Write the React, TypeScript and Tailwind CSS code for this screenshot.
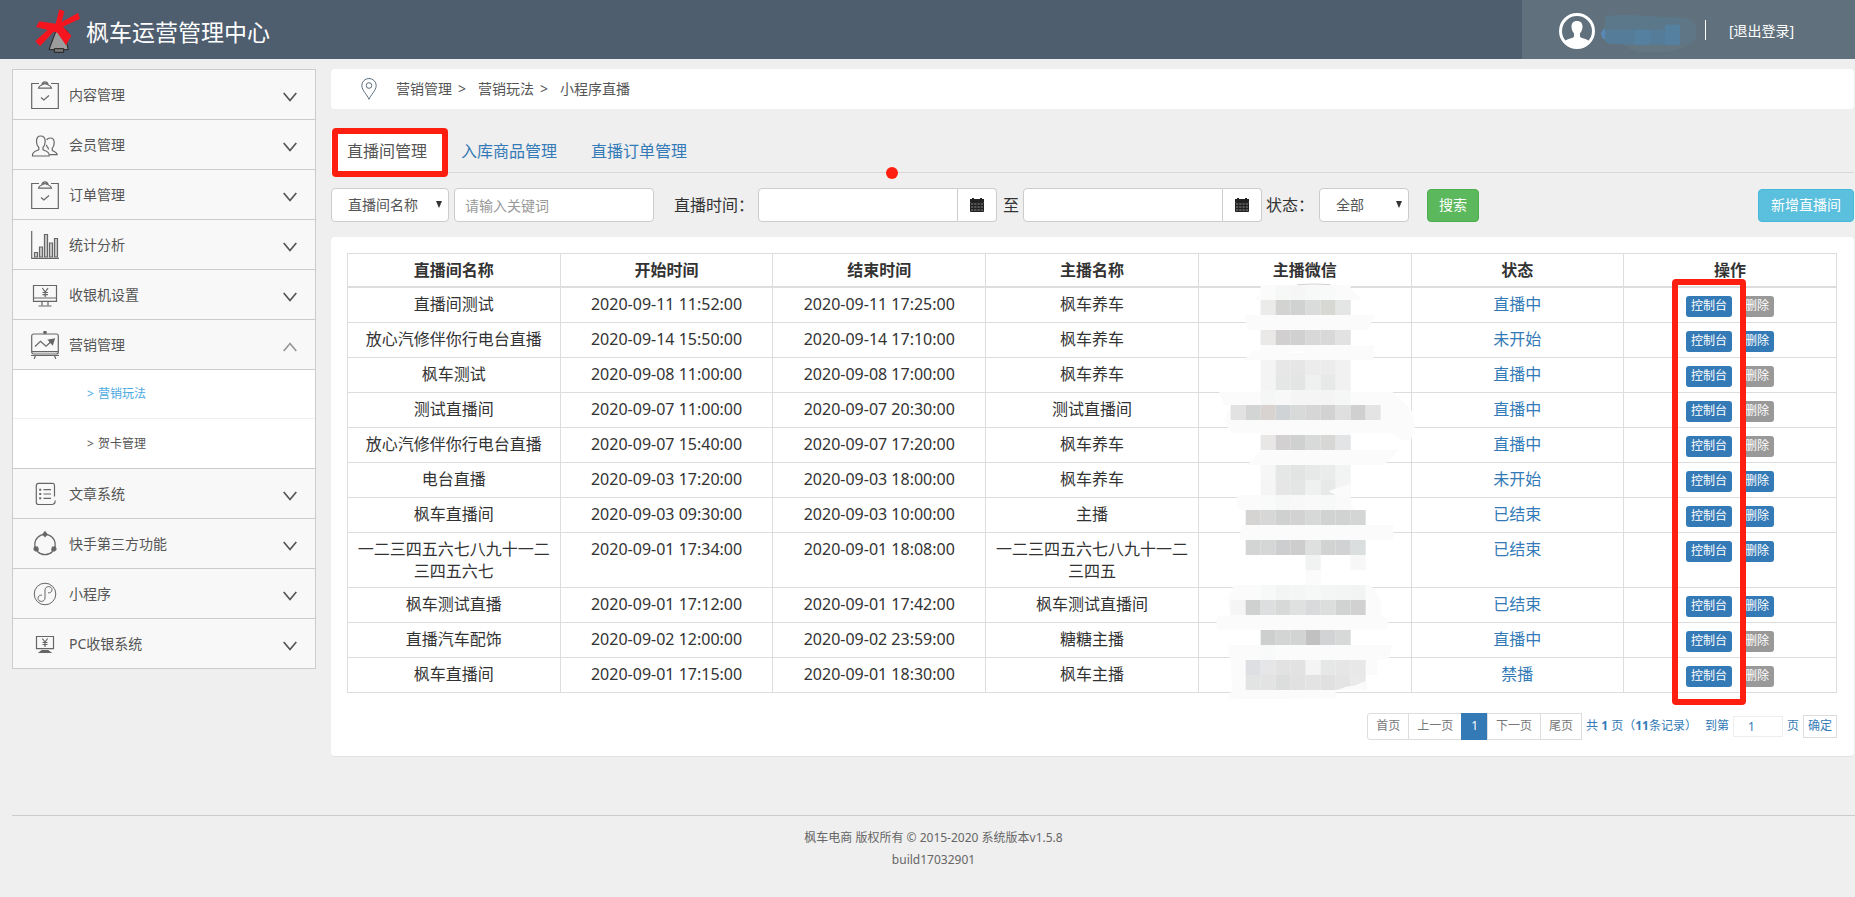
import type { ReactNode } from "react";
import clsx from "clsx";

interface Room {
  name: string;
  start: string;
  end: string;
  host: string;
  status: string;
  canDelete: boolean;
}

const rooms: Room[] = [
  { name: "直播间测试", start: "2020-09-11 11:52:00", end: "2020-09-11 17:25:00", host: "枫车养车", status: "直播中", canDelete: false },
  { name: "放心汽修伴你行电台直播", start: "2020-09-14 15:50:00", end: "2020-09-14 17:10:00", host: "枫车养车", status: "未开始", canDelete: true },
  { name: "枫车测试", start: "2020-09-08 11:00:00", end: "2020-09-08 17:00:00", host: "枫车养车", status: "直播中", canDelete: false },
  { name: "测试直播间", start: "2020-09-07 11:00:00", end: "2020-09-07 20:30:00", host: "测试直播间", status: "直播中", canDelete: false },
  { name: "放心汽修伴你行电台直播", start: "2020-09-07 15:40:00", end: "2020-09-07 17:20:00", host: "枫车养车", status: "直播中", canDelete: false },
  { name: "电台直播", start: "2020-09-03 17:20:00", end: "2020-09-03 18:00:00", host: "枫车养车", status: "未开始", canDelete: true },
  { name: "枫车直播间", start: "2020-09-03 09:30:00", end: "2020-09-03 10:00:00", host: "主播", status: "已结束", canDelete: true },
  { name: "一二三四五六七八九十一二三四五六七", start: "2020-09-01 17:34:00", end: "2020-09-01 18:08:00", host: "一二三四五六七八九十一二三四五", status: "已结束", canDelete: true },
  { name: "枫车测试直播", start: "2020-09-01 17:12:00", end: "2020-09-01 17:42:00", host: "枫车测试直播间", status: "已结束", canDelete: true },
  { name: "直播汽车配饰", start: "2020-09-02 12:00:00", end: "2020-09-02 23:59:00", host: "糖糖主播", status: "直播中", canDelete: false },
  { name: "枫车直播间", start: "2020-09-01 17:15:00", end: "2020-09-01 18:30:00", host: "枫车主播", status: "禁播", canDelete: false },
];

const columns = ["直播间名称", "开始时间", "结束时间", "主播名称", "主播微信", "状态", "操作"];

function Icon({ children }: { children: ReactNode }) {
  return (
    <svg
      viewBox="0 0 28 28"
      className="h-7 w-7 shrink-0"
      fill="none"
      stroke="#666"
      strokeWidth="1.2"
      aria-hidden="true"
    >
      {children}
    </svg>
  );
}

function ClipboardIcon() {
  return (
    <Icon>
      <path d="M8 2.500H.7v25h26.600v-25H20" />
      <path d="M7.500 7.200h13c-.3-2-1.800-2.700-3.300-3.200C16.800 1.800 15.500.8 14 .8s-2.800 1-3.200 3.200c-1.500.5-3 1.200-3.300 3.200zM11.800 3.800c1-1.600 3.400-1.600 4.400 0" />
      <path d="M10 16.500l2.800 2.500 5.200-4.500" />
    </Icon>
  );
}

function UsersIcon() {
  return (
    <Icon>
      <path d="M9.500 5c-3 0-4 2.400-4 5.200 0 2.800 1 5 2.300 6.300v2.200c-1 1-6.300 1.500-6.300 5.300v1h16.700v-1c0-3.800-5.200-4.300-6.200-5.300v-2.200c1.300-1.300 2.200-3.500 2.200-6.300 0-2.800-1.200-5.200-4.700-5.200z" />
      <path d="M15.600 8.800c.8-1.200 2-1.800 3.600-1.800 3 0 4 2 4 4.700 0 2.300-.8 4.300-2 5.600v2c1 1 5 1.700 5 4.400h-7.400M17.300 18.500v-1.300c-.8-.8-1.600-2-1.900-3.400" />
    </Icon>
  );
}

function BarsIcon() {
  return (
    <Icon>
      <path d="M.7 0v27.400H28" />
      <path
        d="M3.500 21.500h3V26h-3zM8.500 16h3v10h-3zM13.500 3.500h3V26h-3zM18.500 12h3v14h-3zM23.500 7.500h3V26h-3z"
        fill="#ccc"
      />
    </Icon>
  );
}

function CashierIcon() {
  return (
    <Icon>
      <path d="M2.500 4.500h23v15.800h-23zM2.500 17h23M11 20.300v4M17 20.300v4M7.500 25h13" />
      <path d="M11.300 7l2.900 4 2.900-4M14.200 11v5M11.500 11.500h5.400M11.500 13.600h5.400" />
    </Icon>
  );
}

function BoardIcon() {
  return (
    <Icon>
      <rect x=".7" y="3" width="26.600" height="20" rx="2" />
      <path d="M1 20.600h26M0 24.500h28M4.500 24.500L3.200 28M23.500 24.500l1.300 3.500" />
      <path d="M4 15.500l5.500-5.200 5.500 5 5-4.500" />
      <path d="M17.500 9l5.800-1-1.800 5.500z" fill="#666" />
      <circle cx="14" cy="1.500" r="1.200" fill="#666" />
    </Icon>
  );
}

function ArticleIcon() {
  return (
    <Icon>
      <path d="M23.500 16.500v-11c0-1.400-.8-2.200-2.200-2.200H7.500c-1.400 0-2.200.8-2.200 2.200v16.800c0 1.400.8 2.200 2.200 2.200h13.200c2.300 0 3.500-1.700 3.500-4" />
      <path d="M12.500 9.700H20M12.500 14H20M12.500 18.300H20" />
      <path d="M8.200 9.700h2M8.200 14h2M8.200 18.300h2" strokeWidth="2" />
    </Icon>
  );
}

function NodesIcon() {
  return (
    <Icon>
      <circle cx="14" cy="14.500" r="10.200" />
      <path d="M14 1.800l2 2.400-2 2.400-2-2.400zM3.500 17h3l.8 3-2.500 1L3 19.500zM24.500 17h-3l-.8 3 2.500 1 1.800-1.500z" fill="#666" />
    </Icon>
  );
}

function MiniProgramIcon() {
  return (
    <Icon>
      <circle cx="14" cy="14" r="10.800" strokeWidth="1" />
      <path
        d="M17 12.800c2 .4 4-.9 4-3 0-1.900-1.500-3.200-3.300-3.200-2 0-3.700 1.300-3.700 3.400v8c0 2.100-1.700 3.400-3.700 3.400C8.500 21.400 7 20.100 7 18.200c0-2.100 2-3.400 4-3"
        strokeWidth="1"
      />
    </Icon>
  );
}

function PcIcon() {
  return (
    <Icon>
      <path d="M5.500 6.500h17v12.200h-17z" />
      <path d="M11.300 8.500L14 12l2.700-3.500M14 12v5M11.500 12.500h5M11.500 14.500h5" />
      <path d="M11 20.500h6l2.500 2h-11z" fill="#666" />
    </Icon>
  );
}

function Arrow({ open = false }: { open?: boolean }) {
  return (
    <svg
      viewBox="0 0 14 10"
      className={clsx("ml-auto mt-1 h-[10px] w-[14px] shrink-0", open && "rotate-180")}
      fill="none"
      stroke={open ? "#999" : "#555"}
      strokeWidth="1.7"
      aria-hidden="true"
    >
      <path d="M.7 1L7 8.500 13.300 1" />
    </svg>
  );
}

function NavItem({ icon, label, open }: { icon: ReactNode; label: string; open?: boolean }) {
  return (
    <button
      aria-expanded={!!open}
      className="flex h-[50px] w-full items-center border-b border-[#ccc] bg-[#f8f8f8] px-[18px] text-sm text-[#555]"
    >
      {icon}
      <span className="ml-[10px]">{label}</span>
      <Arrow open={open} />
    </button>
  );
}

function Sidebar() {
  return (
    <nav className="w-[304px] shrink-0 self-start border border-b-0 border-[#ccc]">
      <NavItem icon={<ClipboardIcon />} label="内容管理" />
      <NavItem icon={<UsersIcon />} label="会员管理" />
      <NavItem icon={<ClipboardIcon />} label="订单管理" />
      <NavItem icon={<BarsIcon />} label="统计分析" />
      <NavItem icon={<CashierIcon />} label="收银机设置" />
      <NavItem icon={<BoardIcon />} label="营销管理" open />
      <a href="#play" className="flex h-[49px] items-center gap-1 border-b border-[#eee] bg-white pl-[74px] text-xs text-[#4aa9e0]">
        <span>&gt;</span>营销玩法
      </a>
      <a href="#card" className="flex h-[50px] items-center gap-1 border-b border-[#ccc] bg-white pl-[74px] text-xs text-[#555]">
        <span>&gt;</span>贺卡管理
      </a>
      <NavItem icon={<ArticleIcon />} label="文章系统" />
      <NavItem icon={<NodesIcon />} label="快手第三方功能" />
      <NavItem icon={<MiniProgramIcon />} label="小程序" />
      <NavItem icon={<PcIcon />} label="PC收银系统" />
    </nav>
  );
}

function Header() {
  return (
    <header className="flex h-[59px] items-center bg-[#4f5e6f] text-white">
      <svg viewBox="0 0 135 135" className="ml-[35px] mt-1 h-[45px] w-[45px]" aria-hidden="true">
        <path d="M66 58L42 122h58L85 62z" fill="#9c9c9c" stroke="#222" strokeWidth="3" />
        <path d="M58 119h28v11H58z" fill="#777" stroke="#222" strokeWidth="3" />
        <path d="M60 54l23 2 17 14-12 2z" fill="#9c9c9c" stroke="#222" strokeWidth="3" />
        <path d="M73 1l15 6-8 32 49-27 6 17-51 24 25 27-16 29-26-38-11-3-41 44L1 96l37-33L3 54l10-17 49 7z" fill="#f5151f" />
      </svg>
      <h1 className="mt-1 pl-[6px] text-[23px] leading-8">枫车运营管理中心</h1>
      <div className="ml-auto flex h-full w-[333px] items-center bg-[#60707c] pl-[37px]">
        <svg viewBox="0 0 36 36" className="mt-[3px] h-9 w-9" aria-hidden="true">
          <circle cx="18" cy="18" r="16.500" fill="none" stroke="#fff" strokeWidth="3" />
          <path d="M18 8c-3.500 0-5.500 2.200-5.500 5.500 0 3 .9 5 2.500 6.800v3.200c-1 2-6.500 2-9 4.500C9 32 13 34.500 18 34.500S27 32 30 28c-2.500-2.500-8-2.500-9-4.500v-3.200c1.600-1.800 2.500-3.800 2.500-6.800C23.500 10.200 21.500 8 18 8z" fill="#fff" />
        </svg>
        <svg viewBox="30 46 291 114" className="ml-[5px] mt-[9px] h-[38px] w-[97px]" aria-hidden="true">
          <clipPath id="account">
            <path d="M45 50c45-6 90-4 130 0 40 2 70 2 100 3 35 4 47 25 45 50-2 18-15 27-30 35-25 16-60 20-100 20-40 1-65-1-85-22-20-4-40-1-50-5-15-7-20-20-23-30l8-13z" />
          </clipPath>
          <g clipPath="url(#account)">
            <path d="M30 46h291v114H30z" fill="#647680" />
            <path d="M45 46h225v44H45z" fill="#5b788a" />
            <path d="M45 90h225v45H45z" fill="#557d99" />
            <path d="M135 90h45v45h-45zM225 75h45v60h-45z" fill="#5680a0" />
            <path d="M270 56h50v79h-50z" fill="#5e7686" />
            <path d="M30 88h15v30H30z" fill="#5a88b5" />
          </g>
        </svg>
        <span className="ml-2 h-5 w-px bg-white" />
        <a href="#logout" className="ml-[23px] mt-[3px] text-sm">[退出登录]</a>
      </div>
    </header>
  );
}

function Tabs() {
  return (
    <div className="relative mt-5 flex gap-[34px] border-b border-[#d8d8d8]">
      <div className="-mb-px border-[6px] border-transparent bg-white px-[10px] py-2">
        <a href="#rooms" className="block text-base leading-[16px] text-[#555]">直播间管理</a>
      </div>
      <a href="#goods" className="-ml-[16px] self-center text-base text-[#337ab7]">入库商品管理</a>
      <a href="#orders" className="self-center text-base text-[#337ab7]">直播订单管理</a>
      <span className="absolute -bottom-[5px] left-px h-[49px] w-[116px] rounded border-[6px] border-[#ff1f10]" />
      <span className="absolute -bottom-[7px] left-[555px] h-3 w-3 rounded-full bg-[#ff1f10]" />
    </div>
  );
}

function Caret() {
  return (
    <svg viewBox="0 0 6 7" className="pointer-events-none absolute right-[7px] top-[13px] h-[7px] w-[6px]" aria-hidden="true">
      <path d="M0 0h6L3 7z" fill="#333" />
    </svg>
  );
}

function DateInput({ id, label }: { id: string; label: string }) {
  return (
    <div className="flex h-[34px] w-[239px]">
      <input
        id={id}
        aria-label={label}
        className="min-w-0 flex-1 rounded-l border border-[#ccc] bg-white px-3 text-sm"
      />
      <button
        type="button"
        aria-label={`选择${label}`}
        className="flex w-[39px] items-center justify-center rounded-r border border-l-0 border-[#ccc] bg-white"
      >
        <svg viewBox="0 0 14 14" className="h-[14px] w-[14px]" aria-hidden="true">
          <path d="M0 1h2V0h2v1h6V0h2v1h2v3H0z" fill="#222" />
          <path d="M.5 4.500h13v9H.5zM.5 7.500h13M.5 10.500h13M3.700 4.500v9M7 4.500v9M10.300 4.500v9" fill="#555" stroke="#222" />
        </svg>
      </button>
    </div>
  );
}

function Filters() {
  return (
    <form className="mt-[15px] flex items-center text-base text-[#333]">
      <div className="relative">
        <select
          aria-label="搜索字段"
          className="block h-[34px] w-[118px] appearance-none rounded border border-[#ccc] bg-white pl-4 text-sm text-[#555]"
        >
          <option>直播间名称</option>
        </select>
        <Caret />
      </div>
      <input
        aria-label="关键词"
        placeholder="请输入关键词"
        className="ml-[5px] h-[34px] w-[200px] rounded border border-[#ccc] bg-white px-[10px] text-sm placeholder:text-[#999]"
      />
      <label htmlFor="from" className="ml-5 mr-1">直播时间：</label>
      <DateInput id="from" label="开始时间" />
      <label htmlFor="to" className="ml-1.5 mr-1">至</label>
      <DateInput id="to" label="结束时间" />
      <label htmlFor="status" className="ml-1 mr-[5px]">状态：</label>
      <div className="relative">
        <select
          id="status"
          className="block h-[34px] w-[90px] appearance-none rounded border border-[#ccc] bg-white pl-4 text-sm text-[#555]"
        >
          <option>全部</option>
        </select>
        <Caret />
      </div>
      <button type="button" className="ml-[18px] h-[33px] rounded border border-[#4cae4c] bg-[#5cb85c] px-[11px] text-sm text-white">
        搜索
      </button>
      <button type="button" className="ml-auto h-[33px] rounded border border-[#46b8da] bg-[#5bc0de] px-3 text-sm text-white">
        新增直播间
      </button>
    </form>
  );
}

// Censored host accounts: [x, y, colours of consecutive 45-unit cells]
const mosaic: [number, number, string[]][] = [
  [285, 46, ["#f6f7f7", "#f5f6f5", "#f7f8f8", "#f8f9f9"]],
  [240, 90, ["#ebebe9", "#d3d3d2", "#d0d2d2", "#dadcdc", "#d7d7d4", "#e4e5e5"]],
  [240, 180, ["#ebe8e8", "#d1cfcf", "#d0d0d0", "#d8d8d8", "#d8d8d8", "#e2e2e3"]],
  [240, 270, ["#f4f4f4", "#e7e7e7", "#e6e6e6", "#ececec", "#ececec", "#f1f1f1"]],
  [240, 315, ["#f4f4f4", "#e5e6e6", "#e3e4e4", "#eff0f0", "#e7e8e8", "#f1f1f1"]],
  [240, 360, ["#f5f6f6", "#f8f8f8", "#f5f5f5", "#f5f5f5", "#f4f4f4", "#f5f6f6"]],
  [150, 405, ["#e2e2e2", "#d3d4d4", "#d8d2d0", "#d0d3d6", "#d8d9d9", "#d5d6d5", "#d2d2d2", "#dfdfdf", "#d0d0d1", "#e4e4e4"]],
  [240, 495, ["#e8e7e6", "#d2d0d0", "#cfd0d0", "#d8d9d9", "#d7d8d5", "#e3e4e5"]],
  [240, 585, ["#f5f6f5", "#e5e6e6", "#e2e4e4", "#e7e9e9", "#eaebeb", "#f2f3f3"]],
  [240, 630, ["#f4f5f4", "#e5e6e5", "#e4e5e5", "#eff1f1", "#e7e8e8", "#f4f4f4"]],
  [240, 675, ["#f9fafa", "#f6f7f7", "#f8f8f8", "#f9f9f9", "#f7f8f8", "#fafafa"]],
  [195, 720, ["#d5d4d3", "#d7d7d7", "#cfd0d0", "#d2d2d2", "#d7d8d8", "#d1d2d2", "#d1d3d3", "#d4d6d6"]],
  [195, 810, ["#d3d5d5", "#d5d6d6", "#cdcecf", "#cdcdce", "#dedfdf", "#d1d3d3", "#d1d2d3", "#dbdede"]],
  [375, 855, ["#f1f2f2"]],
  [510, 855, ["#f7f7f7"]],
  [240, 945, ["#f7f8f8", "#f3f4f4", "#f4f5f5", "#f6f7f7", "#f4f5f5", "#f3f4f4", "#f2f3f3"]],
  [150, 990, ["#f5f5f5", "#cfd0d0", "#dddedf", "#d7d8d8", "#dfe0e0", "#d9dadb", "#dcdddd", "#d1d2d2", "#d1d1d1"]],
  [240, 1080, ["#cdcece", "#d3d4d4", "#d2d3d3", "#c1c1c1", "#d2d3d4", "#d7d8d8"]],
  [240, 1125, ["#f8f9f9"]],
  [195, 1170, ["#dddfe2", "#e6e6e8", "#e2e2e2", "#e2e2e2", "#f4f4f4", "#e6e7e7", "#e6e6e6", "#e8e8e8"]],
  [195, 1215, ["#e2e3e3", "#e3e3e3", "#dcdddd", "#e1e1e1", "#e3e3e3", "#e0e0e0", "#e4e4e4", "#e9e9e9"]],
];

function Mosaic() {
  return (
    <svg viewBox="52 0 639 1290" className="mt-[17px] h-[430px] w-[213px] overflow-visible" aria-hidden="true">
      <g fill="#fbfbfb">
        <path d="M220 90l40-38 90-8h110l50 12 35 34z" />
        <path d="M200 180l-8-45h390l-20 45zM190 270l25-28 365-16-2 44zM240 45h270v1215H240z" />
        <path d="M130 405l-15-40h520l40 38 18 17 10 50-12 40h-30l-30-22H150l-20-38 20-45z" />
        <path d="M200 585l40-45h415l-45 45zM175 720l-8-45h320l35 45zM175 810l8-45h455v45z" />
        <path d="M140 990l20-45h410l30 45v45l25 12-5 32H108v-42h42z" />
        <path d="M150 1170l-10-45h495l-10 40-35 5v45h-35v20l-90 20v30l-325 3 15-30z" />
      </g>
      <path d="M430 666l80-26v35h-50zM240 855h135v90H240zM420 855h90v90h-90zM350 242l30 7h-60z" fill="#fff" />
      {mosaic.map(([x, y, cells]) =>
        cells.map((color, i) => (
          <rect key={`${x + i * 45}-${y}`} x={x + i * 45} y={y} width="45" height="45" fill={color} />
        ))
      )}
      <path d="M443 663l67-22v34h-45zM470 1260l25-10 25-3 35-14v27z" fill="#fbfbfb" />
      <path d="M350 44q50-4 100 0" fill="none" stroke="#bbb" strokeWidth="2" />
    </svg>
  );
}

function RoomTable() {
  return (
    <div className="relative">
      <table className="w-full table-fixed border-collapse text-center text-base leading-[22px] text-[#333]">
        <thead>
          <tr className="h-[33px]">
            {columns.map((c) => (
              <th key={c} className="border border-b-2 border-[#ddd] px-2 py-1 font-bold">
                {c}
              </th>
            ))}
          </tr>
        </thead>
        <tbody>
          {rooms.map((r, i) => (
            <tr key={i} className="h-[35px]">
              <td className="border border-[#ddd] px-2 py-[5px] align-top">{r.name}</td>
              <td className="border border-[#ddd] px-2 py-[5px] align-top">{r.start}</td>
              <td className="border border-[#ddd] px-2 py-[5px] align-top">{r.end}</td>
              <td className="border border-[#ddd] px-2 py-[5px] align-top">{r.host}</td>
              <td className="border border-[#ddd]" />
              <td className="border border-[#ddd] px-2 py-[5px] align-top text-[#337ab7]">{r.status}</td>
              <td className="border border-[#ddd] px-2 pt-2 pb-[5px] align-top">
                <div className="flex justify-center gap-2 text-xs text-white">
                  <button className="h-[21px] rounded-[3px] bg-[#337ab7] px-[5px]">控制台</button>
                  <button
                    disabled={!r.canDelete}
                    className={clsx("h-[21px] rounded-[3px] px-[5px]", r.canDelete ? "bg-[#337ab7]" : "bg-[#999]")}
                  >
                    删除
                  </button>
                </div>
              </td>
            </tr>
          ))}
        </tbody>
      </table>
      <div className="pointer-events-none absolute inset-0 grid grid-cols-7">
        <div className="col-start-5 flex justify-center">
          <Mosaic />
        </div>
        <div className="col-start-7 pl-12">
          <div className="mt-[26px] h-[426px] w-[74px] rounded border-[6px] border-[#ff1f10]" />
        </div>
      </div>
    </div>
  );
}

function Pagination() {
  const page = "-ml-px h-[27px] border border-[#ddd] bg-white px-2 text-[#777]";
  return (
    <nav className="mt-5 flex items-center justify-end text-xs text-[#337ab7]">
      <button className={clsx(page, "rounded-l-[3px]")}>首页</button>
      <button className={page}>上一页</button>
      <button aria-current="page" className="-ml-px h-[27px] bg-[#337ab7] px-[10px] text-white">1</button>
      <button className={page}>下一页</button>
      <button className={page}>尾页</button>
      <span className="ml-1">
        共 <b>1</b> 页（<b>11</b>条记录）
      </span>
      <label htmlFor="page" className="ml-2">到第</label>
      <input
        id="page"
        defaultValue="1"
        className="ml-1 h-[21px] w-[50px] border border-[#eee] pl-[14px]"
      />
      <span className="mx-1">页</span>
      <button className="h-[23px] border border-[#ddd] px-1">确定</button>
    </nav>
  );
}

export default function App() {
  return (
    <div className="min-h-screen bg-[#efefef] font-['Noto_Sans','Noto_Sans_CJK_SC',sans-serif]">
      <Header />
      <div className="flex gap-[15px] pl-3 pr-px pt-[10px]">
        <Sidebar />
        <main className="min-w-0 flex-1">
          <div className="flex h-10 items-center rounded bg-white pl-[30px] text-sm text-[#555]">
            <svg viewBox="0 0 16 22" className="mr-[19px] h-[22px] w-4" fill="none" stroke="#5d6f80" aria-hidden="true">
              <path d="M8 21.300C6.500 17 .8 12.500.8 7.500a7.200 7 0 0 1 14.400 0c0 5-5.700 9.500-7.200 13.800z" />
              <circle cx="8" cy="7.500" r="2.800" />
            </svg>
            <a href="#marketing">营销管理</a>
            <span className="ml-1.5 mr-3">&gt;</span>
            <a href="#play">营销玩法</a>
            <span className="ml-1.5 mr-3">&gt;</span>
            <span>小程序直播</span>
          </div>
          <Tabs />
          <Filters />
          <section className="mt-[15px] rounded border-b border-[#e2e2e2] bg-white py-4 pl-4 pr-[17px]">
            <RoomTable />
            <Pagination />
          </section>
        </main>
      </div>
      <footer className="ml-3 mt-[58px] border-t border-[#ccc] pb-3 pt-[11px] text-center text-xs leading-[22px] text-[#666]">
        <p>枫车电商 版权所有 © 2015-2020 系统版本v1.5.8</p>
        <p>build17032901</p>
      </footer>
    </div>
  );
}
